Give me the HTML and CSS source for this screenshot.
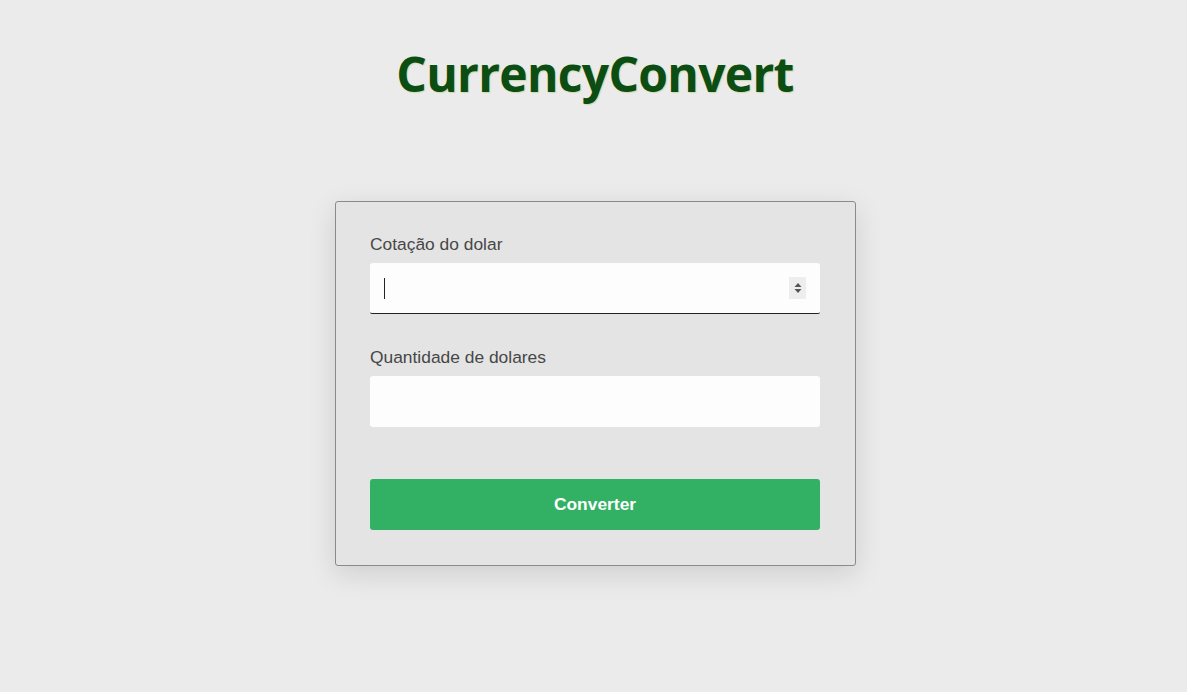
FILE: index.html
```html
<!DOCTYPE html>
<html lang="pt">
<head>
<meta charset="utf-8">
<title>CurrencyConvert</title>
<link rel="stylesheet" href="styles.css">
</head>
<body>
<header class="header">
  <h1 class="logo">CurrencyConvert</h1>
</header>
<main class="main">
  <form class="card">
    <div class="field">
      <label class="label" for="rate">Cotação do dolar</label>
      <div class="input input--focus">
        <span class="caret"></span>
        <span class="spin">
          <svg width="8" height="12" viewBox="0 0 8 12"><path d="M4 1 L7.5 5 L0.5 5 Z M4 11 L7.5 7 L0.5 7 Z" fill="#555"/></svg>
        </span>
      </div>
    </div>
    <div class="field">
      <label class="label" for="qty">Quantidade de dolares</label>
      <div class="input"></div>
    </div>
    <button class="btn" type="button">Converter</button>
  </form>
</main>
</body>
</html>
```
FILE: styles.css
```css
* { box-sizing: border-box; }
html, body { margin: 0; padding: 0; }
body {
  background: #ebebeb;
  font-family: "Liberation Sans", Arial, sans-serif;
  height: 692px;
  overflow: hidden;
}
.header {
  display: flex;
  justify-content: center;
  padding-top: 40px;
  padding-left: 3px;
}
.logo {
  margin: 0;
  font-family: "Open Sans", sans-serif;
  font-weight: 700;
  font-size: 48px;
  line-height: 68px;
  letter-spacing: -0.7px;
  color: #0b4d12;
  text-shadow: 1px 1px 1px rgba(170, 190, 80, 0.4);
}
.main {
  display: flex;
  justify-content: center;
  padding-top: 93px;
  padding-left: 4px;
}
.card {
  width: 521px;
  background: #e4e4e4;
  border: 1px solid #8a8a8a;
  border-radius: 3px;
  box-shadow: 0 8px 28px rgba(0, 0, 0, 0.12);
  padding: 33px 35px 35px 34px;
  display: flex;
  flex-direction: column;
}
.field {
  display: flex;
  flex-direction: column;
  margin-bottom: 34px;
}
.field + .field { margin-bottom: 52px; }
.label {
  font-size: 17.4px;
  line-height: 19px;
  color: #474747;
  margin-bottom: 9px;
}
.input {
  position: relative;
  height: 51px;
  background: #fdfdfd;
  border-radius: 3px;
  display: flex;
  align-items: center;
  padding-left: 14px;
}
.input--focus {
  border-bottom: 1px solid #222;
  border-radius: 3px 3px 2px 2px;
}
.caret {
  width: 1px;
  height: 21px;
  background: #222;
}
.spin {
  position: absolute;
  right: 14px;
  top: 14px;
  width: 17px;
  height: 22px;
  background: #eeeeee;
  display: flex;
  align-items: center;
  justify-content: center;
}
.btn {
  height: 51px;
  border: none;
  border-radius: 3px;
  background: #32b063;
  color: #fff;
  font-family: "Liberation Sans", Arial, sans-serif;
  font-weight: 700;
  font-size: 17.4px;
  cursor: pointer;
}
```
